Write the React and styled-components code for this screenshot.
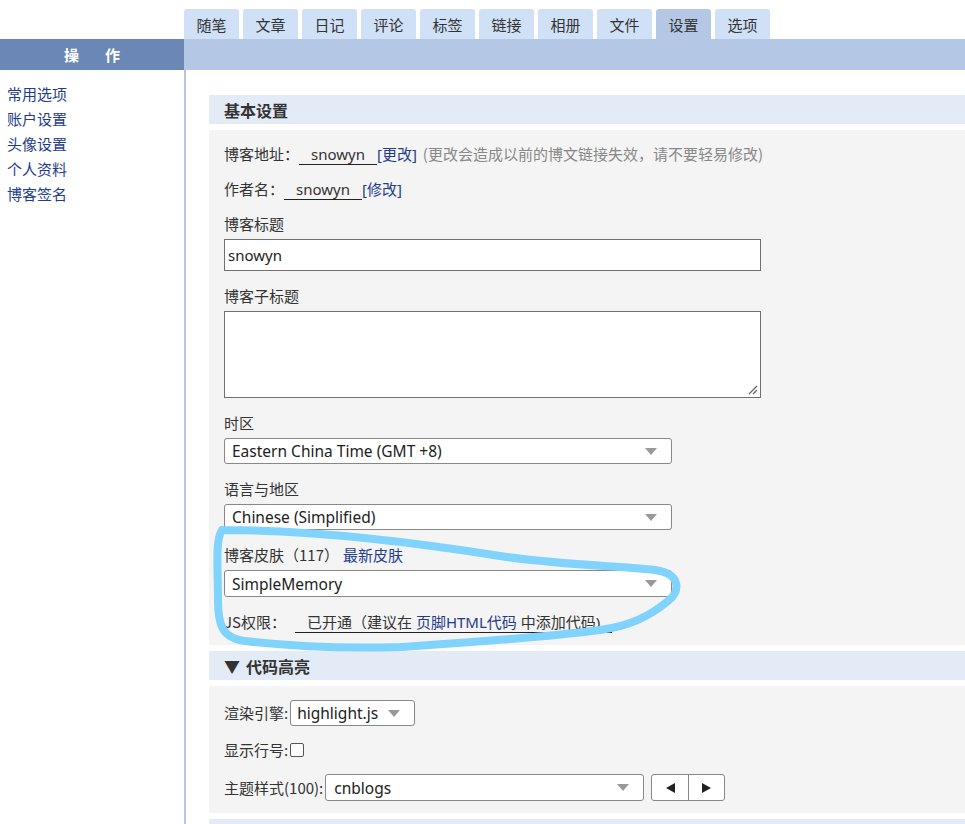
import React from "react";
import styled, { createGlobalStyle } from "styled-components";

const Global = createGlobalStyle`
  html, body { margin: 0; padding: 0; background: #fff; }
  body { font-family: "Noto Sans", "Noto Sans CJK SC", sans-serif; color: #333; }
  * { box-sizing: border-box; }
`;

const Page = styled.div`
  position: relative;
  width: 965px;
  min-height: 824px;
  overflow: hidden;
`;

const TabRow = styled.div`
  display: flex;
  gap: 4px;
  padding: 9px 0 0 184px;
  height: 39px;
`;

const Tab = styled.div`
  width: 55px;
  height: 30px;
  border-radius: 3px 3px 0 0;
  background: ${(p) => (p.$active ? "#b4c8e6" : "#d0e1f7")};
  font-family: "Noto Sans CJK SC", sans-serif;
  font-size: 15px;
  color: #333;
  display: flex;
  align-items: center;
  justify-content: center;
`;

const Bar = styled.div`
  display: grid;
  grid-template-columns: 184px 1fr;
  height: 31px;
`;

const BarLeft = styled.div`
  background: #6a87b5;
  color: #fff;
  font-family: "Noto Sans CJK SC", sans-serif;
  font-weight: bold;
  font-size: 15px;
  display: flex;
  align-items: center;
  justify-content: center;
  gap: 26px;
`;

const BarRight = styled.div`
  background: #b4c8e6;
`;

const Layout = styled.div`
  display: grid;
  grid-template-columns: 186px 1fr;
  min-height: 754px;
`;

const Sidebar = styled.nav`
  border-right: 2px solid #b4c8e6;
  padding: 11px 0 0 7px;
  display: flex;
  flex-direction: column;
`;

const SideLink = styled.a`
  font-family: "Noto Sans CJK SC", sans-serif;
  font-size: 15px;
  line-height: 25px;
  color: #1f3d8c;
  text-decoration: none;
`;

const Main = styled.main`
  padding: 25px 0 0 23px;
  display: flex;
  flex-direction: column;
  gap: 6px;
`;

const SectionHead = styled.div`
  height: 29px;
  background: #e3ebf6;
  display: flex;
  align-items: center;
  padding-left: 15px;
  font-family: "Noto Sans CJK SC", sans-serif;
  font-weight: bold;
  font-size: 16px;
  color: #333;
  gap: 6px;
`;

const SectionBody = styled.div`
  background: #f4f4f4;
  padding: 14px 15px ${(p) => p.$pb ?? 13}px;
  display: flex;
  flex-direction: column;
  gap: ${(p) => p.$gap ?? 15}px;
`;

const Row = styled.div`
  display: flex;
  align-items: center;
  height: ${(p) => p.$h || 20}px;
  line-height: 20px;
  font-size: 15px;
  font-family: "Noto Sans CJK SC", sans-serif;
  white-space: nowrap;
  color: #333;
`;

const Field = styled.div`
  display: flex;
  flex-direction: column;
  gap: 5px;
`;

const Label = styled.div`
  font-family: "Noto Sans CJK SC", sans-serif;
  font-size: 15px;
  height: 20px;
  line-height: 20px;
  color: #333;
  white-space: nowrap;
`;

const Underlined = styled.span`
  display: inline-block;
  border-bottom: 1px solid #222;
  padding: 0 ${(p) => p.$pad ?? 12}px;
  margin-left: ${(p) => p.$ml ?? 0}px;
  height: 21px;
  line-height: 20px;
  margin-top: 1px;
  font-family: "Noto Sans", "Noto Sans CJK SC", sans-serif;
  font-size: 15px;
  color: #333;
`;

const Link = styled.a`
  color: #1f3d8c;
  text-decoration: none;
  font-family: "Noto Sans", "Noto Sans CJK SC", sans-serif;
  margin-left: ${(p) => p.$ml ?? 0}px;
`;

const Note = styled.span`
  color: #888;
  margin-left: 6px;
`;

const TextInput = styled.div`
  width: 537px;
  height: 32px;
  background: #fff;
  border: 1px solid #707070;
  display: flex;
  align-items: center;
  padding-left: 3px;
  font-family: "Noto Sans", sans-serif;
  font-size: 15px;
  color: #222;
`;

const TextArea = styled.div`
  position: relative;
  width: 537px;
  height: 87px;
  background: #fff;
  border: 1px solid #707070;
`;

const Grip = styled.svg`
  position: absolute;
  right: 2px;
  bottom: 2px;
`;

const Select = styled.div`
  width: ${(p) => p.$w}px;
  height: ${(p) => p.$h ?? 26}px;
  flex: none;
  background: #fff;
  border: 1px solid #888;
  border-radius: 3px;
  display: flex;
  align-items: center;
  justify-content: space-between;
  padding: 0 14px 0 ${(p) => p.$pl ?? 7}px;
  font-family: "Noto Sans", sans-serif;
  font-size: 15.5px;
  color: #222;
  margin-left: ${(p) => p.$ml ?? 0}px;
`;

const Caret = styled.span`
  width: 0;
  height: 0;
  border-left: 6px solid transparent;
  border-right: 6px solid transparent;
  border-top: 7px solid #999;
`;

const Check = styled.span`
  display: inline-block;
  width: 14px;
  height: 14px;
  border: 1px solid #555;
  border-radius: 2px;
  background: #fff;
  margin-left: 2px;
`;

const BtnGroup = styled.div`
  display: flex;
  margin-left: 7px;
  height: 27px;
  border: 1px solid #888;
  border-radius: 3px;
  background: #fff;
  overflow: hidden;
`;

const ArrowBtn = styled.div`
  width: 36px;
  display: flex;
  align-items: center;
  justify-content: center;
  & + & { border-left: 1px solid #888; }
`;

const Tri = styled.span`
  width: 0;
  height: 0;
  border-top: 5px solid transparent;
  border-bottom: 5px solid transparent;
  ${(p) => (p.$dir === "left" ? "border-right: 9px solid #222;" : "border-left: 9px solid #222;")}
`;

const Annotation = styled.svg`
  position: absolute;
  left: 0;
  top: 0;
  pointer-events: none;
`;

const tabs = ["随笔", "文章", "日记", "评论", "标签", "链接", "相册", "文件", "设置", "选项"];
const side = ["常用选项", "账户设置", "头像设置", "个人资料", "博客签名"];

export default function App() {
  return (
    <Page>
      <Global />
      <TabRow>
        {tabs.map((t) => (
          <Tab key={t} $active={t === "设置"}>{t}</Tab>
        ))}
      </TabRow>
      <Bar>
        <BarLeft><span>操</span><span>作</span></BarLeft>
        <BarRight />
      </Bar>
      <Layout>
        <Sidebar>
          {side.map((s) => (
            <SideLink key={s} href="#">{s}</SideLink>
          ))}
        </Sidebar>
        <Main>
          <SectionHead>基本设置</SectionHead>
          <SectionBody>
            <Row>
              博客地址：<Underlined>snowyn</Underlined>
              <Link href="#">[更改]</Link>
              <Note>(更改会造成以前的博文链接失效，请不要轻易修改)</Note>
            </Row>
            <Row>
              作者名：<Underlined>snowyn</Underlined>
              <Link href="#">[修改]</Link>
            </Row>
            <Field>
              <Label>博客标题</Label>
              <TextInput>snowyn</TextInput>
            </Field>
            <Field>
              <Label>博客子标题</Label>
              <TextArea>
                <Grip width="10" height="10" viewBox="0 0 10 10">
                  <path d="M9 1 L1 9 M9 5 L5 9" stroke="#666" strokeWidth="1.2" />
                </Grip>
              </TextArea>
            </Field>
            <Field>
              <Label>时区</Label>
              <Select $w={448}>Eastern China Time (GMT +8)<Caret /></Select>
            </Field>
            <Field>
              <Label>语言与地区</Label>
              <Select $w={448}>Chinese (Simplified)<Caret /></Select>
            </Field>
            <Field>
              <Label>
                博客皮肤（117）<Link href="#" $ml={4}>最新皮肤</Link>
              </Label>
              <Select $w={448} $h={27}>SimpleMemory<Caret /></Select>
            </Field>
            <Row>
              JS权限：
              <Underlined $ml={9}>
                已开通（建议在 <Link href="#">页脚HTML代码</Link> 中添加代码)
              </Underlined>
            </Row>
          </SectionBody>
          <SectionHead>
            <span>▼</span>代码高亮
          </SectionHead>
          <SectionBody $gap={14} $pb={12}>
            <Row $h={26}>
              渲染引擎:
              <Select $w={125} $ml={2} $pl={6}>highlight.js<Caret /></Select>
            </Row>
            <Row>
              显示行号:<Check />
            </Row>
            <Row $h={27}>
              主题样式(100):
              <Select $w={319} $h={27} $ml={2} $pl={8}>cnblogs<Caret /></Select>
              <BtnGroup>
                <ArrowBtn><Tri $dir="left" /></ArrowBtn>
                <ArrowBtn><Tri $dir="right" /></ArrowBtn>
              </BtnGroup>
            </Row>
          </SectionBody>
          <SectionHead />
        </Main>
      </Layout>
      <Annotation width="965" height="824" viewBox="0 0 965 824">
        <path
          d="M222 530 C300 530 400 540 500 556 C560 565 620 566 655 570 C682 574 680 592 668 601 C650 616 630 626 600 630 C540 638 460 643 400 647 C340 649 280 645 245 641 C222 638 218 625 218 600 C218 570 215 540 222 530"
          fill="none"
          stroke="#80d3fc"
          strokeWidth="8"
          strokeLinecap="round"
          strokeLinejoin="round"
        />
      </Annotation>
    </Page>
  );
}
